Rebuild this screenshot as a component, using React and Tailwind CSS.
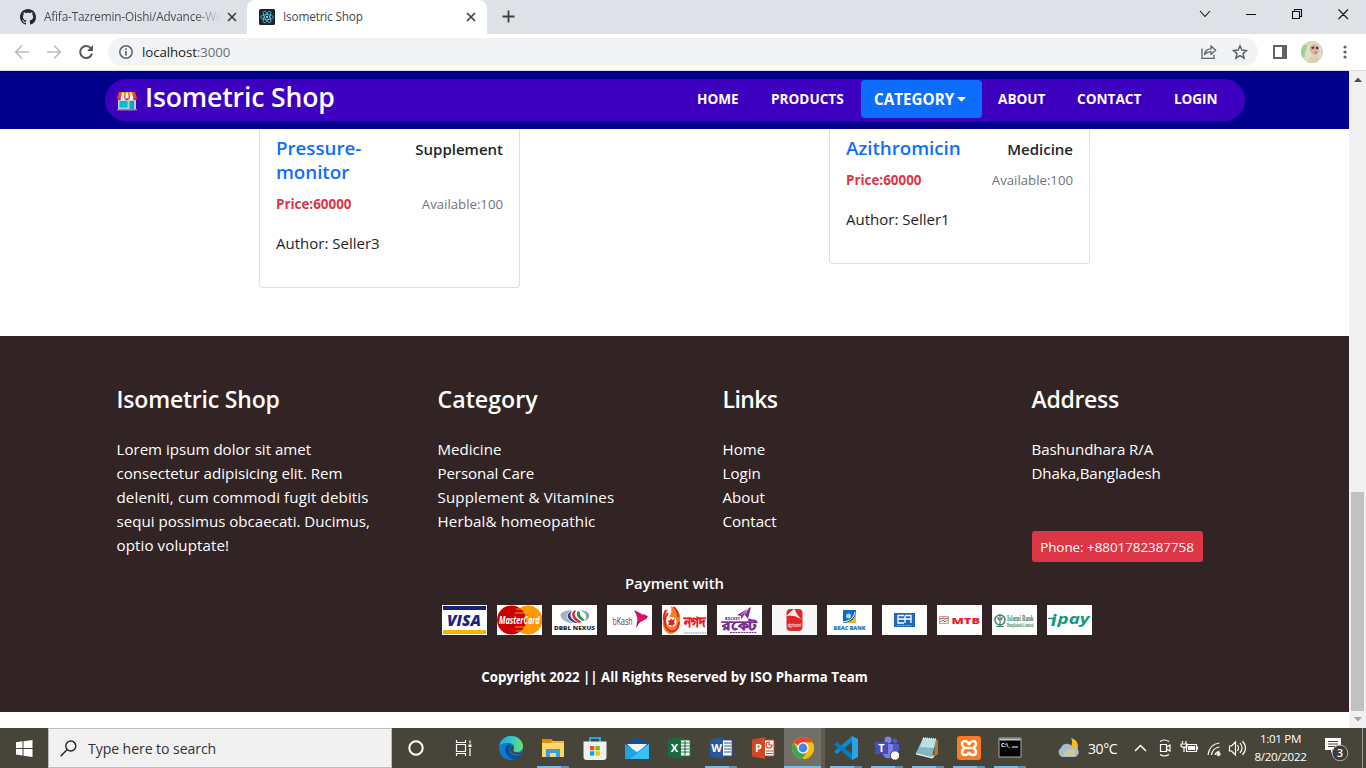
import React from "react";

const links = "Home Login About Contact".split(" ");

function Tab({ active, icon, title, fade }) {
  return (
    <div className={active ? "relative flex h-[34px] w-[240px] items-center rounded-t-[8px] bg-white pl-3 pr-[10px]" : "relative flex h-[34px] w-[247px] items-center pl-5 pr-[9px]"}>
      {icon}
      <span className={fade
        ? "ml-2 w-[177px] overflow-hidden whitespace-nowrap bg-linear-to-r from-[#45484c] from-85% to-transparent bg-clip-text text-[11.800px] tracking-[-0.18px] text-transparent"
        : "ml-2 flex-1 whitespace-nowrap text-[11.800px] tracking-[-0.18px] text-[#45484c]"}>{title}</span>
      <svg className="ml-auto" width="12" height="12" viewBox="0 0 12 12" stroke="#3c4043" strokeWidth="1.7"><path d="M2 2l8 8M10 2l-8 8" /></svg>
    </div>
  );
}

function ReactIcon() {
  return (
    <svg width="16" height="16" viewBox="0 0 16 16" fill="none" stroke="#61dafb" strokeWidth=".7">
      <rect width="16" height="16" rx="1.5" fill="#20232a" stroke="none" />
      <ellipse cx="8" cy="8" rx="6.4" ry="2.5" />
      <ellipse cx="8" cy="8" rx="6.4" ry="2.5" transform="rotate(60 8 8)" />
      <ellipse cx="8" cy="8" rx="6.4" ry="2.5" transform="rotate(120 8 8)" />
      <circle cx="8" cy="8" r="1.2" fill="#61dafb" stroke="none" />
    </svg>
  );
}

function GithubIcon() {
  return (
    <svg width="16" height="16" viewBox="0 0 16 16" fill="#24292f"><path d="M8 0C3.58 0 0 3.58 0 8c0 3.54 2.29 6.53 5.47 7.59.4.07.55-.17.55-.38 0-.19-.01-.82-.01-1.49-2.01.37-2.53-.49-2.69-.94-.09-.23-.48-.94-.82-1.13-.28-.15-.68-.52-.01-.53.63-.01 1.08.58 1.23.82.72 1.21 1.87.87 2.33.66.07-.52.28-.87.51-1.07-1.78-.2-3.64-.89-3.64-3.95 0-.87.31-1.59.82-2.15-.08-.2-.36-1.02.08-2.12 0 0 .67-.21 2.2.82.64-.18 1.32-.27 2-.27s1.36.09 2 .27c1.53-1.04 2.2-.82 2.2-.82.44 1.1.16 1.92.08 2.12.51.56.82 1.27.82 2.15 0 3.07-1.87 3.75-3.65 3.95.29.25.54.73.54 1.48 0 1.07-.01 1.93-.01 2.2 0 .21.15.46.55.38A8.01 8.01 0 0016 8c0-4.42-3.58-8-8-8z" /></svg>
  );
}

function Browser() {
  return (
    <div className="shrink-0">
      <div className="flex h-[34px] bg-[#dee1e6]">
        <Tab icon={<GithubIcon />} title="Afifa-Tazremin-Oishi/Advance-We" fade />
        <Tab active icon={<ReactIcon />} title="Isometric Shop" />
        <svg className="ml-[15px] mt-[10px]" width="13" height="13" viewBox="0 0 13 13" stroke="#3c4043" strokeWidth="1.8"><path d="M6.5 .5v12M.5 6.5h12" /></svg>
        <svg className="ml-auto mr-[14px]" width="156" height="34" viewBox="0 0 156 34" fill="none" stroke="#111" strokeWidth="1.1">
          <path d="M4 11l5 5.500 5-5.500M50 14.500h10M96.500 11.500h7v7h-7zM98.500 11.500v-2h7v7h-2M142.500 9.500l9.500 9.500M152 9.500l-9.500 9.500" />
        </svg>
      </div>
      <div className="flex h-9 items-center bg-white">
        <svg width="108" height="36" viewBox="0 0 108 36" fill="none" strokeWidth="1.7">
          <g stroke="#babcbe"><path d="M29 18H16M22 11.500L15.700 18l6.300 6.500" /><path d="M47 18h13M54 11.500l6.300 6.500-6.300 6.500" /></g>
          <path d="M91 14.500A6 6 0 1 0 92 19.500" stroke="#55585c" strokeWidth="2" />
          <path d="M93 11v6h-6z" fill="#55585c" />
        </svg>
        <div className="flex h-7 w-[1150px] items-center rounded-full bg-[#f1f3f4] pl-[11px]">
          <svg width="14" height="14" viewBox="0 0 14 14" fill="none" stroke="#5f6368" strokeWidth="1.5"><circle cx="7" cy="7" r="6.200" /><path d="M7 6v4.500M7 3.300v1.500" strokeWidth="1.700" /></svg>
          <span className="ml-[9px] pt-px text-[13.300px] tracking-[-0.1px] text-[#202124]">localhost<span className="text-[#6b6f73]">:3000</span></span>
          <svg className="ml-auto mr-[10px]" width="48" height="18" viewBox="0 0 48 18" fill="none" stroke="#5f6368" strokeWidth="1.300">
            <path d="M2 5.500v9.800h12v-3.500" /><path d="M4.500 11.500C5 7.500 8 5.800 11 5.800V3l4.700 4.300L11 11.500V8.700C8.500 8.700 6.500 9.500 4.500 11.500z" strokeLinejoin="round" />
            <path d="M40 2.800l1.900 4.300 4.600.4-3.500 3.100 1.100 4.600-4.100-2.500-4.100 2.500 1.100-4.600-3.500-3.100 4.600-.4z" strokeWidth="1.500" />
          </svg>
        </div>
        <svg className="ml-[15px]" width="14" height="14" viewBox="0 0 14 14"><path d="M0 0h14v14H0zM2 2v10h7V2z" fill="#5f6368" fillRule="evenodd" /></svg>
        <svg className="ml-[14px]" width="22" height="22" viewBox="0 0 22 22">
          <defs><clipPath id="avatar"><circle cx="11" cy="11" r="11" /></clipPath></defs>
          <g clipPath="url(#avatar)">
            <rect width="22" height="22" fill="#d9d5c4" /><path d="M0 4l6 0 1 12H0z" fill="#9bd38c" />
            <path d="M4 22C3 14 5 2 12 2s9 6 8 20z" fill="#e3dcc6" /><ellipse cx="13.500" cy="8.500" rx="4.700" ry="5.500" fill="#d9b3a0" transform="rotate(-20 13.500 8.500)" />
            <path d="M10 6.500l3-1.200.5 2-2.500.8zM15 5.500l2.500.5-.3 2-2 .3z" fill="#4b3440" /><path d="M13 11.500l3-.8-.8 1.800z" fill="#b2505a" /><path d="M7 22c0-5 4-8 11-8v8z" fill="#d8d0b3" />
          </g>
        </svg>
        <svg className="ml-[19px]" width="6" height="16" viewBox="0 0 6 16" fill="#5f6368"><circle cx="3" cy="3" r="1.600" /><circle cx="3" cy="8" r="1.600" /><circle cx="3" cy="13" r="1.600" /></svg>
      </div>
      <div className="h-px bg-[#d8dade]" />
    </div>
  );
}

function ShopIcon() {
  return (
    <svg className="ml-3 mt-[2px]" width="20" height="19" viewBox="0 0 20 19">
      <path d="M1 7h18v11H1z" fill="#c9c5cf" /><path d="M0 17h20v1.500H0z" fill="#8d8794" />
      <path d="M2.500 9h8v6.500h-8z" fill="#00bcd4" /><path d="M12.500 9h4.500v8h-4.500z" fill="#00acc1" />
      <path d="M2 0h16l2 6.500H0z" fill="#f44336" />
      <path d="M5.300 0h2.200L7 7H3.500zM9 0h2l.7 7H8.300zM12.500 0h2.200l1.800 7H13z" fill="#fff" />
      <path d="M0 6.300a2 2 0 0 0 4 0zM8 6.300a2 2 0 0 0 4 0zM16 6.300a2 2 0 0 0 4 0z" fill="#d9342b" /><path d="M4 6.300a2 2 0 0 0 4 0zM12 6.300a2 2 0 0 0 4 0z" fill="#eceff1" />
      <path d="M4 0h12v1.500H3.500z" fill="#ff9800" opacity=".7" />
    </svg>
  );
}

function NavBar() {
  return (
    <header className="flex h-[58px] shrink-0 items-start bg-[#00008b] pl-[105px] pt-2">
      <nav className="flex h-[42px] w-[1140px] items-center rounded-full bg-[#3e00bf] text-[13.600px] font-bold text-white">
        <ShopIcon />
        <span className="ml-2 w-[552px] pb-[6px] text-[26.600px] font-semibold leading-none tracking-[-0.150px]">Isometric Shop</span>
        <span className="w-[74px] pb-[2px]">HOME</span>
        <span className="w-[90px] pb-[2px]">PRODUCTS</span>
        <span className="mb-[2px] flex h-[38px] w-[121px] items-center rounded-[4px] bg-[#0d6efd] pl-[13px] text-[15.200px] tracking-[0.030px]">CATEGORY
          <svg className="ml-[3px]" width="9" height="5" viewBox="0 0 9 5" fill="#fff"><path d="M0 0h9L4.500 4.800z" /></svg>
        </span>
        <span className="ml-4 w-[79px] pb-[2px]">ABOUT</span>
        <span className="w-[97px] pb-[2px]">CONTACT</span>
        <span className="pb-[2px] tracking-[-0.100px]">LOGIN</span>
      </nav>
    </header>
  );
}

function Product({ name, type, author, className }) {
  return (
    <article className={className}>
      <div className="flex items-start justify-between">
        <h5 className="w-[120px] text-[18.800px] font-semibold leading-6 tracking-[-0.050px] text-[#0d6efd]">{name}</h5>
        <h6 className="pt-[3px] text-[15px] font-semibold leading-5 text-[#212529]">{type}</h6>
      </div>
      <div className="mt-2 flex justify-between text-[13.200px] leading-6">
        <span className="text-[13.400px] font-bold text-[#dc3545]">Price:60000</span>
        <span className="text-[#6c757d]">Available:100</span>
      </div>
      <p className="mt-[15px] text-[15px] leading-6 text-[#212529]">Author: {author}</p>
    </article>
  );
}

const payments = [
  <><path d="M0 0h45v30H0z" fill="#fff" /><path d="M1 1h43v4H1z" fill="#17227b" /><path d="M1 25h43v4H1z" fill="#f8b500" /><text x="5" y="20.500" fontSize="15.500" fontWeight="800" fontStyle="italic" fill="#1a237e" textLength="34" lengthAdjust="spacingAndGlyphs">VISA</text></>,
  <><path d="M0 0h45v30H0z" fill="#fff" /><circle cx="31" cy="15" r="14.500" fill="#ff9900" /><circle cx="14.500" cy="15" r="14.500" fill="#cc0000" /><path d="M19 4h7M18 8h9M18 22h9M19 26h7" stroke="#f90" strokeWidth="1" /><text transform="translate(2 18.700) scale(.74 1)" fontSize="10" fontWeight="700" fontStyle="italic" fill="#fff" textLength="55" lengthAdjust="spacingAndGlyphs">MasterCard</text></>,
  <><path d="M0 0h45v30H0z" fill="#fff" /><path d="M21 5C10 5 7 9 9 12c2 5 9 6 12 6-7-4-9-9 0-13z" fill="#a7b5bd" /><path d="M20 6c-7 3-5 9 3 12h3C18 14 17 10 20 6z" fill="#263e93" /><path d="M23 5c-6 4-2 10 4 13l3-1C23 13 21 9 24 6z" fill="#d72d37" /><path d="M26 6c-3 3 0 8 5 10l2-1c-4-3-6-6-5-8z" fill="#24905a" /><path d="M28 5c12 1 11 8 5 11 2-4 2-8-5-11z" fill="#8ea1ab" /><text x="2" y="24.500" fontSize="5" fontWeight="800" fill="#26303a" textLength="41" lengthAdjust="spacingAndGlyphs">DBBL NEXUS</text></>,
  <><path d="M0 0h45v30H0z" fill="#fff" /><text transform="translate(5.500 20) scale(.72 1)" fontSize="10" fontWeight="500" fill="#443c3c" textLength="28" lengthAdjust="spacingAndGlyphs"><tspan fill="#d12053">b</tspan>Kash</text><path d="M27 5l7 3.500 1 4-4 7-1-8z" fill="#c2185b" /><path d="M30 17l3-8 5 .5 2 4-9 5z" fill="#e2136e" /><path d="M37 10l4 1-2 3zM30 17l-1 6 4-6z" fill="#ad1457" /></>,
  <><path d="M0 0h45v30H0z" fill="#fff" /><path d="M9 1c8 3 10 8 9 15-1 8-4 13-10 13C2 28 0 20 1 14c0-5 2-8 5-10-3 6-3 11 0 14 0-7 5-9 3-17z" fill="#f58220" /><path d="M6 8c-5 6-4 15 2 18 5 2 9-3 9-9M12 2c3 3 4 6 4 10M4 5c-2 3-3 6-2 10" fill="none" stroke="#e21b22" strokeWidth="1.700" /><circle cx="9.500" cy="17" r="5" fill="#fff" /><path d="M9 13l1 2 3-1-1 3 1 2-2 1-1 2-1-2-3 0 1-2-1-2 2-1z" fill="#ed1c24" /><text x="22" y="21.500" fontSize="14" fontWeight="700" fill="#ed1c24" stroke="#ed1c24" strokeWidth=".5" textLength="21" lengthAdjust="spacingAndGlyphs">নগদ</text><path d="M22 28h22" stroke="#888" strokeDasharray="1.500 .8" /></>,
  <><path d="M0 0h45v30H0z" fill="#fff" /><path d="M20 10l14-8-3 12-3-4-4 4v-3z" fill="#7b2d91" /><path d="M24 10l7-6-5 8" fill="none" stroke="#fff" strokeWidth=".6" /><text x="8" y="14.500" fontSize="4" fontWeight="800" fill="#7b2d91" textLength="15" lengthAdjust="spacingAndGlyphs">ROCKET</text><text x="5" y="25" fontSize="12" fontWeight="800" fill="#7b2d91" stroke="#7b2d91" strokeWidth=".6" textLength="35" lengthAdjust="spacingAndGlyphs">রকেট</text><path d="M13 27.500h27" stroke="#7b2d91" strokeDasharray="2 .7" /></>,
  <><path d="M0 0h45v30H0z" fill="#f7f7f7" /><rect x="14.500" y="4" width="16" height="22" rx="4" fill="#e6252b" /><path d="M14.500 11c4-4 6-6.500 8-7 2 5 4 8 8 11-5-4-10-5-16-4z" fill="#f4f4f4" /><path d="M15 11c4-1 7-3 8-6M20 6l6 7" stroke="#c9c9c9" strokeWidth=".7" fill="none" /><text x="15.500" y="22" fontSize="4.500" fontStyle="italic" fill="#fff" textLength="14">dghoori</text></>,
  <><path d="M0 0h45v30H0z" fill="#fff" /><path d="M16 5h13v13H16z" fill="#0871b9" /><path d="M16 18c8 0 12-4 13-11v11z" fill="#fbb40a" /><path d="M16 17c8-1 11-5 12-10" fill="none" stroke="#fff" /><circle cx="21.500" cy="11" r="2.500" fill="#acd4ec" /><text x="6.500" y="24.500" fontSize="5.500" fontWeight="800" fill="#1479bd" textLength="32" lengthAdjust="spacingAndGlyphs">BRAC BANK</text></>,
  <><path d="M0 0h45v30H0z" fill="#fff" /><path d="M12 8h21v14H12z" fill="#1d69b8" /><path d="M22 10.500h-6v7.500h6M16 14h13M23 10.500v7.500M23 10.500h6v7.500" fill="none" stroke="#fff" strokeWidth="1.300" /><path d="M15 20.500h15" stroke="#a6c8e9" strokeDasharray="1 .5" strokeWidth=".8" /></>,
  <><path d="M0 0h45v30H0z" fill="#fff" /><path d="M2.500 11.500h9v7h-9z" fill="#f4f4f4" stroke="#aaa" /><path d="M3 14l3-1 2 1 3-1" fill="none" stroke="#e22" /><path d="M3 17l3-2 2 2 3-2" fill="none" stroke="#2a8d54" strokeWidth=".8" /><text x="14.500" y="18.500" fontSize="9.500" fontWeight="800" fill="#ed1c2e" textLength="28.500" lengthAdjust="spacingAndGlyphs">MTB</text></>,
  <><path d="M0 0h45v30H0z" fill="#fff" /><circle cx="8" cy="15" r="5" fill="none" stroke="#40866a" strokeWidth="1.500" /><path d="M8 9v13M6 12c0 4 4 4 4 0M4 21.500h8" fill="none" stroke="#40866a" strokeWidth="1.200" /><text transform="translate(15 16) scale(.62 1)" fontFamily="Liberation Serif, serif" fontSize="8.500" fontWeight="700" fill="#45876c" textLength="43" lengthAdjust="spacingAndGlyphs">Islami Bank</text><text transform="translate(15 22) scale(.54 1)" fontFamily="Liberation Serif, serif" fontSize="6" fontWeight="700" fill="#45876c" textLength="49" lengthAdjust="spacingAndGlyphs">Bangladesh Limited</text></>,
  <><path d="M0 0h45v30H0z" fill="#fff" /><path d="M1 13.500h6" stroke="#14977f" strokeWidth="1.500" /><text x="4" y="20.500" fontSize="16" fontWeight="800" fontStyle="italic" fill="#14977f">i</text><text x="10.500" y="19" fontSize="13.500" fontWeight="700" fontStyle="italic" fill="#14977f" textLength="32" lengthAdjust="spacingAndGlyphs">pay</text></>,
];

function Footer() {
  return (
    <footer className="flex h-[376px] flex-col bg-[#322424] pt-12 text-[15.100px] leading-6 text-white">
      <div className="flex h-[187px] pl-[116.500px]">
        <section className="w-[321px]">
          <h4 className="text-[23px] font-semibold leading-[30px] tracking-[-0.200px]">Isometric Shop</h4>
          <p className="mt-[23px] w-[275px]">Lorem ipsum dolor sit amet<br />consectetur adipisicing elit. Rem<br /><span className="tracking-[0.130px]">deleniti, cum commodi fugit debitis</span><br />sequi possimus obcaecati. Ducimus,<br /><span className="tracking-[0.100px]">optio voluptate!</span></p>
        </section>
        <section className="w-[285px]">
          <h4 className="mb-[23px] text-[23.200px] font-semibold leading-[30px]">Category</h4>
          <p>Medicine</p><p className="tracking-[-0.100px]">Personal Care</p><p className="tracking-[0.150px]">Supplement &amp; Vitamines</p><p className="tracking-[0.140px]">Herbal&amp; homeopathic</p>
        </section>
        <section className="w-[309px]">
          <h4 className="mb-[23px] text-[23px] font-semibold leading-[30px] tracking-[-0.600px]">Links</h4>
          {links.map((l) => <p key={l}>{l}</p>)}
        </section>
        <section>
          <h4 className="mb-[23px] text-[23px] font-semibold leading-[30px] tracking-[-0.300px]">Address</h4>
          <p className="tracking-[-0.070px]">Bashundhara R/A</p><p className="tracking-[-0.100px]">Dhaka,Bangladesh</p>
          <button className="mt-[46px] h-[31px] w-[171px] whitespace-nowrap rounded-[3px] bg-[#dc3545] text-[13.350px]">Phone: +8801782387758</button>
        </section>
      </div>
      <h6 className="text-center text-[14.850px] font-semibold">Payment with</h6>
      <div className="mt-[10px] flex gap-[10px] pl-[442px]">
        {payments.map((art, i) => <svg key={i} width="45" height="30" viewBox="0 0 45 30">{art}</svg>)}
      </div>
      <p className="mt-[30px] text-center text-[13.250px] font-bold">Copyright 2022 || All Rights Reserved by ISO Pharma Team</p>
    </footer>
  );
}

function Office({ color, dark, letter, children }) {
  return <><path d="M13 4h10v16H13z" fill="#fff" stroke={color} /><g stroke={color} fill="none" strokeWidth="1.200">{children}</g><path d="M1 3.500L14 1v22L1 20.500z" fill={dark} /><text x="7.500" y="16" fontSize="11" fontWeight="700" fill="#fff" textAnchor="middle">{letter}</text></>;
}

const apps = [
  { n: "edge", art: <><defs><linearGradient id="eg" x1="0" x2="1"><stop stopColor="#1ba5e6" /><stop offset=".5" stopColor="#32c6c8" /><stop offset="1" stopColor="#6be06a" /></linearGradient></defs><circle cx="12" cy="12" r="12" fill="#0c7bd0" /><path d="M0 11C1 4 6 0 12 0c7 0 12 5 12 10 0 4-3 6-6.500 6-3 0-4-1-3-3C16 9 13 7 9.500 7 5 7 1 8 0 11z" fill="url(#eg)" /><path d="M8 9c-5 8 2 14 8 15 3-1 5-3 6.500-6-4 3-11 2-12-4-.4-2 .5-4 2-5-2-.7-3.500-.5-4.500 0z" fill="#0b4f9b" /><path d="M13.500 9.500c-2 1-3 4-1.500 6 2 3 6 4 10.500 2l1.500-2c-2 1-6 1.500-8.500.5-1.500-.7-1.500-1.700-.8-2.800.7-1.500.4-3-1.200-3.700z" fill="#484538" /></> },
  { n: "files", line: true, art: <><path d="M1 3h9l2 2h11v16H1z" fill="#f5b82e" /><path d="M1 3h9l1 2-1 2H1z" fill="#d99000" /><path d="M1 7h22v14H1z" fill="#ffd769" /><path d="M5 21v-8h14v8h-4v-4H9v4z" fill="#3f9bdd" /></> },
  { n: "store", art: <><path d="M7 6V2h10v4" fill="none" stroke="#23a8e0" strokeWidth="2" /><path d="M.5 5.500h23V21q0 3-3 3h-17q-3 0-3-3z" fill="#f0f0f0" /><path d="M7 10h4.300v4.300H7z" fill="#f25022" /><path d="M12.500 10h4.300v4.300h-4.300z" fill="#7fba00" /><path d="M7 15.300h4.300v4.300H7z" fill="#00a4ef" /><path d="M12.500 15.300h4.300v4.300h-4.300z" fill="#ffb900" /></> },
  { n: "mail", art: <><path d="M0 8L12 1l12 7v4H0z" fill="#174e99" /><path d="M2 8h20l-9 9h-2z" fill="#f1f4f7" /><path d="M0 8l12 8 12-8v15H0z" fill="#20a2e5" /><path d="M24 8L5 23h19z" fill="#38c0f4" /></> },
  { n: "excel", art: <Office color="#20744a" dark="#1d6b40" letter="X"><path d="M14 7h8M14 10h8M14 13h8M14 16h8M18 5v14" /></Office> },
  { n: "word", line: true, art: <Office color="#2b579a" dark="#2b579a" letter="W"><path d="M15 7h7M15 10h7M15 13h7M15 16h7" /></Office> },
  { n: "powerpoint", art: <Office color="#d24726" dark="#d24726" letter="P"><path d="M18 6a3 3 0 1 0 3 3h-3zM15 15h7M15 17.500h7" /></Office> },
  { n: "chrome", active: true, line: true, art: <g><circle cx="12" cy="12" r="11" fill="#fbbc05" /><path d="M12 12L2.500 6.500A11 11 0 0 1 21.500 6.500H12z" fill="#ea4335" /><path d="M2.500 6.500A11 11 0 0 0 11.500 23L16.800 14.500 12 12 7.300 14.500z" fill="#34a853" /><path d="M12 6.500h9.500A11 11 0 0 1 11.500 23L17 14z" fill="#fbbc05" /><circle cx="12" cy="12" r="5.700" fill="#fff" /><circle cx="12" cy="12" r="4.400" fill="#4285f4" /></g> },
  { n: "code", line: true, art: <><path d="M18 0l6 3v18l-6 3z" fill="#2aa3ed" /><path d="M18 0v6L3 18l-3-2.500z" fill="#0f8ad0" /><path d="M18 24v-6L3 6 0 8.500z" fill="#0879be" /></> },
  { n: "teams", line: true, art: <><circle cx="13" cy="4" r="3.500" fill="#7b83eb" /><circle cx="20" cy="5" r="2.500" fill="#5059c9" /><path d="M8 8h10v9c0 7-10 7-10 0z" fill="#7b83eb" /><path d="M18 8h6v8c0 4-5 4-6 2z" fill="#5059c9" /><path d="M0 6h13v12H0z" fill="#464eb8" /><text x="6.500" y="16" fontSize="11" fontWeight="700" fill="#fff" textAnchor="middle">T</text><circle cx="20" cy="19.500" r="4.700" fill="#fff" stroke="#484538" strokeWidth="1" /></> },
  { n: "notepad", line: true, art: <><path d="M19 3l3 1 0 14-4 3z" fill="#a97b35" /><path d="M7 2l13 1-4 18-16-4z" fill="#7fb9c3" /><path d="M7 2l13 1-2 9-14-1z" fill="#b9e0e4" /><path d="M0 17l16 4 1-3 1 3-2 1.500-16-4z" fill="#eef5f4" /><path d="M7 2l13 1" stroke="#eef" strokeWidth="1.500" strokeDasharray="1 1" /></> },
  { n: "xampp", line: true, art: <><rect width="24" height="24" rx="3" fill="#fb7a24" /><path d="M12 9c-1-5-7-5-7-1 0 2 1 3 3 4-2 1-3 2-3 4 0 4 6 4 7 0 1 4 7 4 7 0 0-2-1-3-3-4 2-1 3-2 3-4 0-4-6-4-7 1zM9 12h6" stroke="#fff" strokeWidth="2.500" fill="none" /></> },
  { n: "terminal", line: true, art: <><path d="M1 2h22v19H1z" fill="#050505" stroke="#aaa" /><path d="M1.500 2.500h21v2h-21z" fill="#bfc7ce" /><text x="3" y="11" fontSize="5.500" fontWeight="700" fill="#fff">C:\_</text><path d="M14 11h6" stroke="#fff" /></> },
];

function Taskbar() {
  return (
    <div className="flex h-10 shrink-0 bg-[#474539] text-white">
      <div className="flex w-12 items-center justify-center"><svg width="17" height="17" viewBox="0 0 17 17" fill="#fff"><path d="M0 2.300L6.500 1.300V8H0zM7.500 1.200L16.500 0v8h-9zM0 9h6.500v6.500L0 14.600zM7.500 9h9v8l-9-1.300z" /></svg></div>
      <div className="flex w-[344px] items-center border border-[#bdbdbb] bg-[#f1f1f1] pl-[11px]">
        <svg width="17" height="17" viewBox="0 0 17 17" fill="none" stroke="#222" strokeWidth="1.400"><circle cx="10.800" cy="6" r="5" /><path d="M7.200 9.600L.7 16.300" /></svg>
        <span className="ml-[11px] pt-px text-[14.100px] tracking-[-0.080px] text-[#333]">Type here to search</span>
      </div>
      <div className="flex w-12 items-center justify-center"><svg width="18" height="18" viewBox="0 0 18 18"><circle cx="9" cy="9" r="6.700" fill="none" stroke="#fff" strokeWidth="2" /></svg></div>
      <div className="flex w-[50px] items-center justify-start pl-[15px]"><svg width="18" height="18" viewBox="0 0 18 18" fill="none" stroke="#fff" strokeWidth="1.200"><path d="M1.500 1v2.500h9V1M1.500 5.500h9v7h-9zM1.500 17v-2.500h9V17M15 1.500v3M15 9v8" /><path d="M13.500 5.500h3v2.500h-3z" fill="#fff" stroke="none" /></svg></div>
      {apps.map((a, i) => (
        <div key={a.n} className={i < 7 ? "flex w-[42px] flex-col items-center" : a.active ? "flex w-[41px] flex-col items-center border-r-4 border-[#5e5c52] bg-[#716f66]" : "flex w-[41px] flex-col items-center"}>
          <svg className="mt-2" width="24" height="24" viewBox="0 0 24 24">{a.art}</svg>
          {a.line && <div className={a.active ? "mt-auto h-[2px] w-full bg-[#76b9ed]" : "mt-auto h-[2px] w-8 border-r-8 border-[#5e8db3] bg-[#76b9ed]"} />}
        </div>
      ))}
      <div className="ml-auto flex items-center">
        <svg width="23" height="22" viewBox="0 0 23 22"><path d="M14 1c8 2 9 11 4 14l-5-4c2-3 3-6 1-10z" fill="#fbbd13" /><path d="M5 20a5 5 0 0 1-1-9 6 6 0 0 1 11-1 5 5 0 0 1 3 10z" fill="#a8bdce" /><path d="M7 19c-1-6 8-9 11-5 2 3-1 5-4 5z" fill="#d4c993" /></svg>
        <span className="ml-[8px] w-[46px] pt-px text-[14px] tracking-[-0.400px]">30°C</span>
        <svg width="114" height="22" viewBox="0 0 114 22" fill="none" stroke="#fff" strokeWidth="1.200">
          <path d="M1 14l5.500-5.500L12 14" strokeWidth="1.500" />
          <path d="M26.500 7.500h6v7h-6zM32.500 10l3.500-2v6l-3.500-2M26 4.500q4-3 9 0M26 17.500q4 3 9 0" />
          <path d="M52.500 7.500h10v7h-10zM63.500 9.500v3" /><path d="M54 9h7v4h-7z" fill="#fff" stroke="none" /><path d="M48.500 4v3M52 4v3M47 7h6v2q-3 3-6 0zM50 10v5" />
          <path d="M85.500 6q-10 1-11.500 12M85.500 10q-7 1-8 8M85.500 14q-4 1-4.500 4" /><circle cx="84.500" cy="17" r="1.500" fill="#fff" />
          <path d="M95.500 9h2l4-4v13l-4-4h-2zM103.500 8q2 3 0 6M106 6q4 5 0 10M108.500 4q6 7 0 14" />
        </svg>
        <div className="ml-[4px] w-[57px] whitespace-nowrap text-center text-[11.600px] leading-[18px] tracking-[-0.300px]">1:01 PM<br />8/20/2022</div>
        <svg className="ml-[14px]" width="30" height="30" viewBox="0 0 30 30"><path d="M2 5h16v12h-7l-3 3v-3H2z" fill="#fff" /><path d="M5 8.500h10M5 11h10M5 13.500h7" stroke="#474539" /><circle cx="17" cy="20" r="7.800" fill="#3c3b34" stroke="#aaa" /><text x="17" y="24" fontSize="10.500" fontWeight="600" fill="#fff" textAnchor="middle">3</text></svg>
        <div className="ml-[9px] mr-[3px] h-10 w-px bg-[#9a9990]" />
      </div>
    </div>
  );
}

export default function App() {
  return (
    <div className="flex h-[768px] w-[1366px] flex-col overflow-hidden bg-white font-['Open_Sans','Noto_Sans',sans-serif]">
      <Browser />
      <div className="flex h-[657px] shrink-0">
        <div className="w-[1349px]">
          <NavBar />
          <main className="flex h-[207px] items-start gap-[309px] pl-[259px]">
            <Product name="Pressure-monitor" type="Supplement" author="Seller3" className="h-[159px] w-[261px] rounded-b-[4px] border border-t-0 border-[#dfdfdf] px-4 pt-[7px]" />
            <Product name="Azithromicin" type="Medicine" author="Seller1" className="h-[135px] w-[261px] rounded-b-[4px] border border-t-0 border-[#dfdfdf] px-4 pt-[7px]" />
          </main>
          <Footer />
        </div>
        <div className="flex w-[17px] flex-col items-center bg-[#f1f1f1]">
          <svg className="mt-[6px]" width="8" height="5" viewBox="0 0 8 5" fill="#505050"><path d="M0 5l4-4.500L8 5z" /></svg>
          <div className="mt-[410px] h-[219px] w-[13px] bg-[#c1c1c1]" />
          <svg className="mt-[6px]" width="8" height="5" viewBox="0 0 8 5" fill="#a3a3a3"><path d="M0 0h8L4 4.500z" /></svg>
        </div>
      </div>
      <Taskbar />
    </div>
  );
}
